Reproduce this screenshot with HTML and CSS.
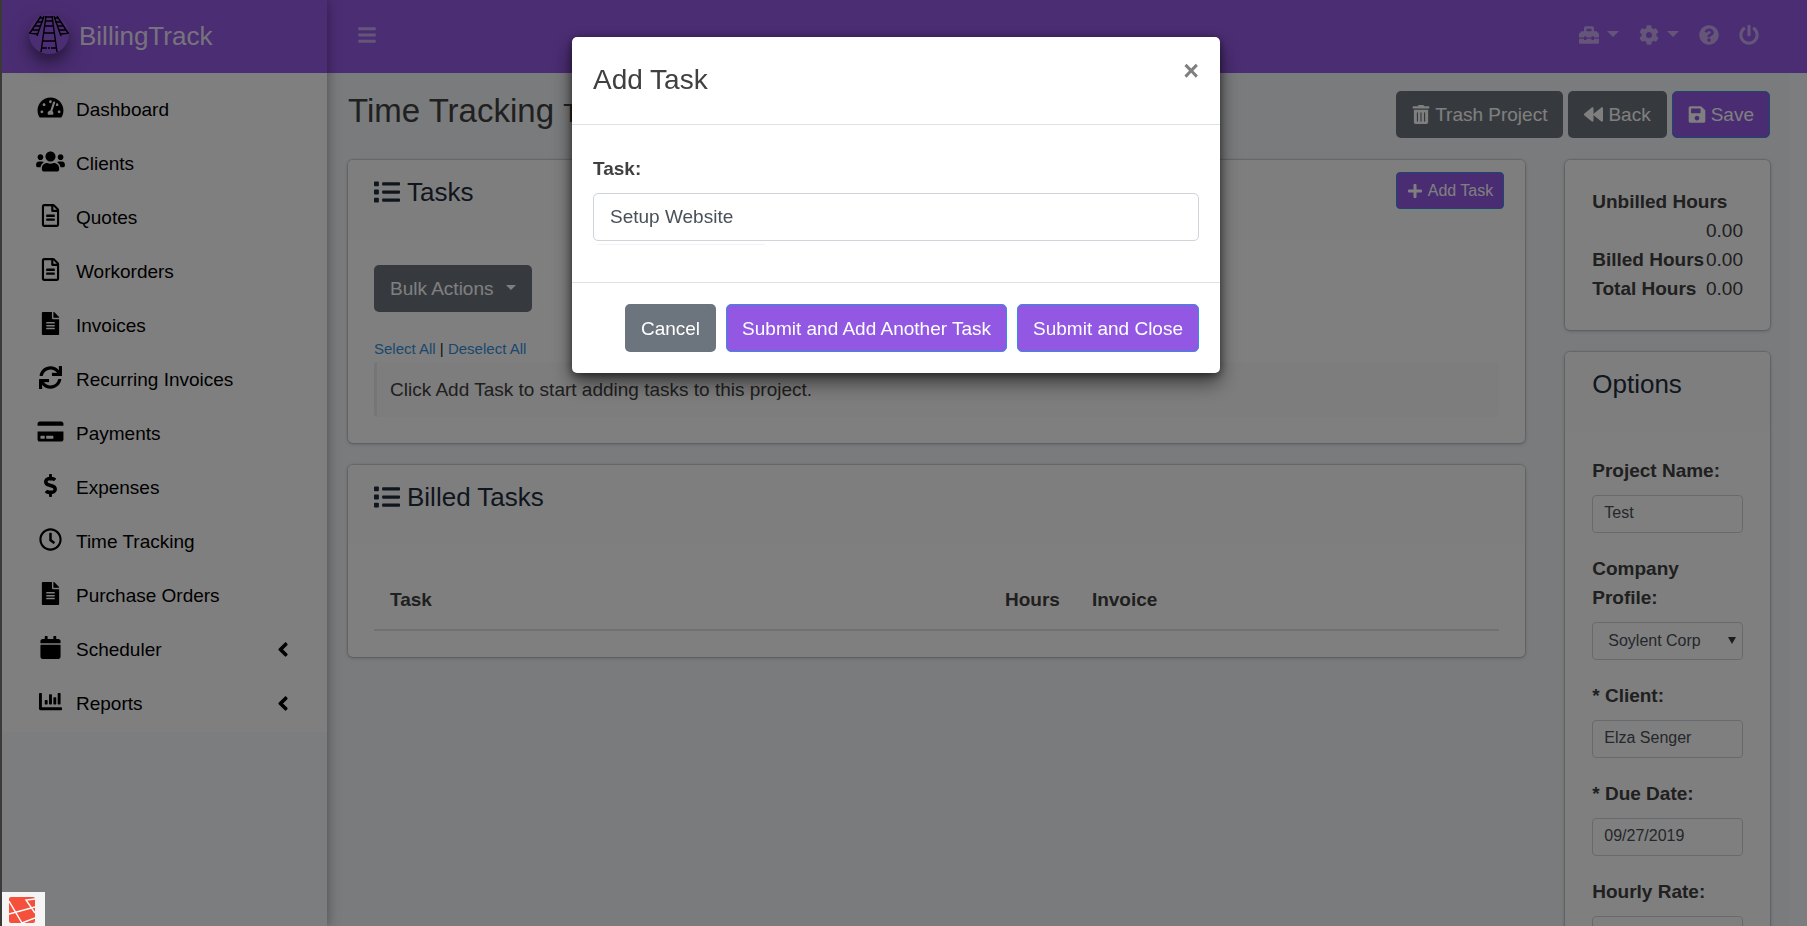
FILE: index.html
```html
<!DOCTYPE html>
<html lang="en">
<head>
<meta charset="utf-8">
<title>BillingTrack - Time Tracking</title>
<link rel="stylesheet" href="styles.css">
</head>
<body>
<svg class="sprite" aria-hidden="true">
  <symbol id="i-dash" viewBox="0 0 576 512"><path d="M288 32C128.94 32 0 160.94 0 320c0 52.8 14.25 102.26 39.06 144.8 5.61 9.62 16.3 15.2 27.44 15.2h443c11.14 0 21.83-5.58 27.44-15.2C561.75 422.26 576 372.8 576 320c0-159.06-128.94-288-288-288zm0 64c14.71 0 26.58 10.13 30.32 23.65-1.11 2.26-2.64 4.23-3.45 6.67l-9.22 27.67c-5.13 3.49-10.97 6.01-17.64 6.01-17.67 0-32-14.33-32-32S270.33 96 288 96zM96 384c-17.67 0-32-14.33-32-32s14.33-32 32-32 32 14.33 32 32-14.33 32-32 32zm48-160c-17.67 0-32-14.33-32-32s14.33-32 32-32 32 14.33 32 32-14.33 32-32 32zm246.77-72.41l-61.33 184C343.13 347.33 352 364.54 352 384c0 11.72-3.38 22.55-8.88 32H232.88c-5.5-9.45-8.88-20.28-8.88-32 0-33.94 26.5-61.43 59.9-63.59l61.34-184.01c4.17-12.56 17.73-19.45 30.36-15.17 12.57 4.19 19.35 17.79 15.17 30.36zm14.66 57.2l15.52-46.55c3.47-1.29 7.13-2.23 11.05-2.23 17.67 0 32 14.33 32 32s-14.33 32-32 32c-11.38-.01-20.89-6.28-26.57-15.22zM480 384c-17.67 0-32-14.33-32-32s14.33-32 32-32 32 14.33 32 32-14.33 32-32 32z"/></symbol>
  <symbol id="i-users" viewBox="0 0 640 512"><path d="M96 224c35.3 0 64-28.7 64-64s-28.7-64-64-64-64 28.7-64 64 28.7 64 64 64zm448 0c35.3 0 64-28.7 64-64s-28.7-64-64-64-64 28.7-64 64 28.7 64 64 64zm32 32h-64c-17.6 0-33.5 7.1-45.1 18.6 40.3 22.1 68.9 62 75.1 109.4h66c17.7 0 32-14.3 32-32v-32c0-35.3-28.7-64-64-64zm-256 0c61.9 0 112-50.1 112-112S381.9 32 320 32 208 82.1 208 144s50.1 112 112 112zm76.8 32h-8.3c-20.8 10-43.9 16-68.5 16s-47.6-6-68.5-16h-8.3C179.6 288 128 339.6 128 403.2V432c0 26.5 21.5 48 48 48h288c26.5 0 48-21.5 48-48v-28.8c0-63.6-51.6-115.2-115.2-115.2zm-223.7-13.4C161.5 263.1 145.6 256 128 256H64c-35.3 0-64 28.7-64 64v32c0 17.7 14.3 32 32 32h65.9c6.3-47.4 34.9-87.3 75.2-109.4z"/></symbol>
  <symbol id="i-file" viewBox="0 0 384 512"><path d="M288 248v28c0 6.6-5.4 12-12 12H108c-6.6 0-12-5.4-12-12v-28c0-6.6 5.4-12 12-12h168c6.6 0 12 5.4 12 12zm-12 72H108c-6.6 0-12 5.4-12 12v28c0 6.6 5.4 12 12 12h168c6.6 0 12-5.4 12-12v-28c0-6.6-5.4-12-12-12zm108-188.1V464c0 26.5-21.5 48-48 48H48c-26.5 0-48-21.5-48-48V48C0 21.5 21.5 0 48 0h204.1C264.8 0 277 5.1 286 14.1L369.9 98c9 8.9 14.1 21.2 14.1 33.9zm-128-80V128h76.1L256 51.9zM336 464V176H232c-13.3 0-24-10.7-24-24V48H48v416h288z"/></symbol>
  <symbol id="i-file-solid" viewBox="0 0 384 512"><path d="M224 136V0H24C10.7 0 0 10.7 0 24v464c0 13.3 10.7 24 24 24h336c13.3 0 24-10.7 24-24V160H248c-13.2 0-24-10.8-24-24zm64 236c0 6.6-5.4 12-12 12H108c-6.6 0-12-5.4-12-12v-8c0-6.6 5.4-12 12-12h168c6.6 0 12 5.4 12 12v8zm0-64c0 6.6-5.4 12-12 12H108c-6.6 0-12-5.4-12-12v-8c0-6.6 5.4-12 12-12h168c6.6 0 12 5.4 12 12v8zm0-72v8c0 6.6-5.4 12-12 12H108c-6.6 0-12-5.4-12-12v-8c0-6.6 5.4-12 12-12h168c6.6 0 12 5.4 12 12zm96-114.1v6.1H256V0h6.1c6.4 0 12.5 2.5 17 7l97.9 98c4.5 4.5 7 10.6 7 16.9z"/></symbol>
  <symbol id="i-sync" viewBox="0 0 512 512"><path d="M440.65 12.57l4 82.77A247.16 247.16 0 0 0 255.83 8C134.73 8 33.91 94.92 12.29 209.82A12 12 0 0 0 24.09 224h49.05a12 12 0 0 0 11.67-9.26 175.91 175.91 0 0 1 317-56.94l-101.46-4.86a12 12 0 0 0-12.57 12v47.41a12 12 0 0 0 12 12H500a12 12 0 0 0 12-12V12a12 12 0 0 0-12-12h-47.37a12 12 0 0 0-11.98 12.57zM255.83 432a175.61 175.61 0 0 1-146-77.8l101.8 4.87a12 12 0 0 0 12.57-12v-47.4a12 12 0 0 0-12-12H12a12 12 0 0 0-12 12V500a12 12 0 0 0 12 12h47.35a12 12 0 0 0 12-12.6l-4.15-82.57A247.17 247.17 0 0 0 255.83 504c121.11 0 221.93-86.92 243.55-201.82a12 12 0 0 0-11.8-14.18h-49.05a12 12 0 0 0-11.67 9.26A175.86 175.86 0 0 1 255.83 432z"/></symbol>
  <symbol id="i-card" viewBox="0 0 576 512"><path d="M0 432c0 26.5 21.5 48 48 48h480c26.5 0 48-21.5 48-48V256H0v176zm192-68c0-6.6 5.4-12 12-12h136c6.6 0 12 5.4 12 12v40c0 6.6-5.4 12-12 12H204c-6.6 0-12-5.4-12-12v-40zm-128 0c0-6.6 5.4-12 12-12h72c6.6 0 12 5.4 12 12v40c0 6.6-5.4 12-12 12H76c-6.6 0-12-5.4-12-12v-40zM576 80v48H0V80c0-26.5 21.5-48 48-48h480c26.5 0 48 21.5 48 48z"/></symbol>
  <symbol id="i-dollar" viewBox="0 0 288 512"><path d="M209.2 233.4l-108-31.6C88.7 198.2 80 186.5 80 173.5c0-16.3 13.2-29.5 29.5-29.5h66.3c12.2 0 24.2 3.7 34.2 10.5 6.1 4.1 14.3 3.1 19.5-2l34.8-34c7.1-6.9 6.1-18.4-1.8-24.5C238 74.8 207.4 64.1 176 64V16c0-8.8-7.2-16-16-16h-32c-8.8 0-16 7.2-16 16v48h-2.5C45.8 64-5.4 118.7.5 183.6c4.2 46.1 39.4 83.6 83.8 96.6l102.5 30c12.5 3.7 21.2 15.3 21.2 28.3 0 16.3-13.2 29.5-29.5 29.5h-66.3C100 368 88 364.3 78 357.5c-6.1-4.1-14.3-3.1-19.5 2l-34.8 34c-7.1 6.9-6.1 18.4 1.8 24.5 24.5 19.2 55.1 29.9 86.5 30v48c0 8.8 7.2 16 16 16h32c8.8 0 16-7.2 16-16v-48.2c46.6-.9 90.3-28.6 105.7-72.7 21.5-61.6-14.6-124.8-72.5-141.7z"/></symbol>
  <symbol id="i-clock" viewBox="0 0 512 512"><path d="M256 8C119 8 8 119 8 256s111 248 248 248 248-111 248-248S393 8 256 8zm0 448c-110.5 0-200-89.5-200-200S145.5 56 256 56s200 89.5 200 200-89.5 200-200 200zm61.8-104.4l-84.9-61.7c-3.1-2.3-4.9-5.9-4.9-9.7V116c0-6.6 5.4-12 12-12h32c6.6 0 12 5.4 12 12v141.7l66.8 48.6c5.4 3.9 6.5 11.4 2.6 16.8L334.6 349c-3.9 5.3-11.4 6.5-16.8 2.6z"/></symbol>
  <symbol id="i-calendar" viewBox="0 0 448 512"><path d="M12 192h424c6.6 0 12 5.4 12 12v260c0 26.5-21.5 48-48 48H48c-26.5 0-48-21.5-48-48V204c0-6.6 5.4-12 12-12zm436-44v-36c0-26.5-21.5-48-48-48h-48V12c0-6.6-5.4-12-12-12h-40c-6.6 0-12 5.4-12 12v52H160V12c0-6.6-5.4-12-12-12h-40c-6.6 0-12 5.4-12 12v52H48C21.5 64 0 85.5 0 112v36c0 6.6 5.4 12 12 12h424c6.6 0 12-5.4 12-12z"/></symbol>
  <symbol id="i-chart" viewBox="0 0 512 512"><path d="M332.8 320h38.4c6.4 0 12.8-6.4 12.8-12.8V172.8c0-6.4-6.4-12.8-12.8-12.8h-38.4c-6.4 0-12.8 6.4-12.8 12.8v134.4c0 6.4 6.4 12.8 12.8 12.8zm96 0h38.4c6.4 0 12.8-6.4 12.8-12.8V76.8c0-6.4-6.4-12.8-12.8-12.8h-38.4c-6.4 0-12.8 6.4-12.8 12.8v230.4c0 6.4 6.4 12.8 12.8 12.8zm-288 0h38.4c6.4 0 12.8-6.4 12.8-12.8v-70.4c0-6.4-6.4-12.8-12.8-12.8h-38.4c-6.4 0-12.8 6.4-12.8 12.8v70.4c0 6.4 6.4 12.8 12.8 12.8zm96 0h38.4c6.4 0 12.8-6.4 12.8-12.8V108.8c0-6.4-6.4-12.8-12.8-12.8h-38.4c-6.4 0-12.8 6.4-12.8 12.8v198.4c0 6.4 6.4 12.8 12.8 12.8zM496 384H64V80c0-8.84-7.16-16-16-16H16C7.16 64 0 71.16 0 80v336c0 17.67 14.33 32 32 32h464c8.84 0 16-7.16 16-16v-32c0-8.84-7.16-16-16-16z"/></symbol>
  <symbol id="i-angle" viewBox="0 0 256 512"><path d="M31.7 239l136-136c9.4-9.4 24.6-9.4 33.9 0l22.6 22.6c9.4 9.4 9.4 24.6 0 33.9L127.9 256l96.4 96.4c9.4 9.4 9.4 24.6 0 33.9L201.7 409c-9.4 9.4-24.6 9.4-33.9 0l-136-136c-9.5-9.4-9.5-24.6-.1-34z"/></symbol>
  <symbol id="i-list" viewBox="0 0 512 512"><path d="M80 368H16a16 16 0 0 0-16 16v64a16 16 0 0 0 16 16h64a16 16 0 0 0 16-16v-64a16 16 0 0 0-16-16zm0-320H16A16 16 0 0 0 0 64v64a16 16 0 0 0 16 16h64a16 16 0 0 0 16-16V64a16 16 0 0 0-16-16zm0 160H16a16 16 0 0 0-16 16v64a16 16 0 0 0 16 16h64a16 16 0 0 0 16-16v-64a16 16 0 0 0-16-16zm416 176H176a16 16 0 0 0-16 16v32a16 16 0 0 0 16 16h320a16 16 0 0 0 16-16v-32a16 16 0 0 0-16-16zm0-320H176a16 16 0 0 0-16 16v32a16 16 0 0 0 16 16h320a16 16 0 0 0 16-16V80a16 16 0 0 0-16-16zm0 160H176a16 16 0 0 0-16 16v32a16 16 0 0 0 16 16h320a16 16 0 0 0 16-16v-32a16 16 0 0 0-16-16z"/></symbol>
  <symbol id="i-bars" viewBox="0 0 448 512"><path d="M16 132h416c8.8 0 16-7.2 16-16V76c0-8.8-7.2-16-16-16H16C7.2 60 0 67.2 0 76v40c0 8.8 7.2 16 16 16zm0 160h416c8.8 0 16-7.2 16-16v-40c0-8.8-7.2-16-16-16H16c-8.8 0-16 7.2-16 16v40c0 8.8 7.2 16 16 16zm0 160h416c8.8 0 16-7.2 16-16v-40c0-8.8-7.2-16-16-16H16c-8.8 0-16 7.2-16 16v40c0 8.8 7.2 16 16 16z"/></symbol>
  <symbol id="i-toolbox" viewBox="0 0 512 512"><path d="M502.63 214.63l-45.25-45.25c-6-6-14.14-9.37-22.63-9.37H384V80c0-26.51-21.49-48-48-48H176c-26.51 0-48 21.49-48 48v80H77.25c-8.49 0-16.62 3.37-22.63 9.37L9.37 214.63c-6 6-9.37 14.14-9.37 22.63V320h128v-16c0-8.84 7.16-16 16-16h32c8.84 0 16 7.16 16 16v16h128v-16c0-8.84 7.16-16 16-16h32c8.84 0 16 7.16 16 16v16h128v-82.75c0-8.48-3.37-16.62-9.37-22.62zM320 160H192V96h128v64zm64 208c0 8.84-7.16 16-16 16h-32c-8.84 0-16-7.16-16-16v-16H192v16c0 8.84-7.16 16-16 16h-32c-8.84 0-16-7.16-16-16v-16H0v96c0 17.67 14.33 32 32 32h448c17.67 0 32-14.33 32-32v-96H384v16z"/></symbol>
  <symbol id="i-cog" viewBox="0 0 512 512"><path d="M487.4 315.7l-42.6-24.6c4.3-23.2 4.3-47 0-70.2l42.6-24.6c4.9-2.8 7.1-8.6 5.5-14-11.1-35.6-30-67.8-54.7-94.6-3.8-4.1-10-5.1-14.8-2.3L380.8 110c-17.9-15.4-38.5-27.3-60.8-35.1V25.8c0-5.6-3.9-10.5-9.4-11.7-36.7-8.2-74.3-7.8-109.2 0-5.5 1.2-9.4 6.1-9.4 11.7V75c-22.2 7.9-42.8 19.8-60.8 35.1L88.7 85.5c-4.9-2.8-11-1.9-14.8 2.3-24.7 26.7-43.6 58.9-54.7 94.6-1.7 5.4.6 11.2 5.5 14L67.3 221c-4.3 23.2-4.3 47 0 70.2l-42.6 24.6c-4.9 2.8-7.1 8.6-5.5 14 11.1 35.6 30 67.8 54.7 94.6 3.8 4.1 10 5.1 14.8 2.3l42.6-24.6c17.9 15.4 38.5 27.3 60.8 35.1v49.2c0 5.6 3.9 10.5 9.4 11.7 36.7 8.2 74.3 7.8 109.2 0 5.5-1.2 9.4-6.1 9.4-11.7v-49.2c22.2-7.9 42.8-19.8 60.8-35.1l42.6 24.6c4.9 2.8 11 1.9 14.8-2.3 24.7-26.7 43.6-58.9 54.7-94.6 1.5-5.5-.7-11.3-5.6-14.1zM256 336c-44.1 0-80-35.9-80-80s35.9-80 80-80 80 35.9 80 80-35.9 80-80 80z"/></symbol>
  <symbol id="i-help" viewBox="0 0 512 512"><path d="M504 256c0 136.997-111.043 248-248 248S8 392.997 8 256C8 119.083 119.043 8 256 8s248 111.083 248 248zM262.655 90c-54.497 0-89.255 22.957-116.549 63.758-3.536 5.286-2.353 12.415 2.715 16.258l34.699 26.31c5.205 3.947 12.621 3.008 16.665-2.122 17.864-22.658 30.113-35.797 57.303-35.797 20.429 0 45.698 13.148 45.698 32.958 0 14.976-12.363 22.667-32.534 33.976C247.128 238.528 216 254.941 216 296v4c0 6.627 5.373 12 12 12h56c6.627 0 12-5.373 12-12v-1.333c0-28.462 83.186-29.647 83.186-106.667 0-58.002-60.165-102-116.531-102zM256 338c-25.365 0-46 20.635-46 46 0 25.364 20.635 46 46 46s46-20.636 46-46c0-25.365-20.635-46-46-46z"/></symbol>
  <symbol id="i-power" viewBox="0 0 512 512"><path d="M400 54.1c63 45 104 118.6 104 201.9 0 136.8-110.8 247.7-247.5 248C120 504.3 8.2 393 8 256.4 7.9 173.1 48.9 99.3 111.8 54.2c11.7-8.3 28-4.8 35 7.7L162.6 90c5.9 10.5 3.1 23.8-6.6 31-41.5 30.8-68 79.6-68 134.9-.1 92.3 74.5 168.1 168 168.1 91.6 0 168.6-74.2 168-169.1-.3-51.8-24.7-101.8-68.1-134-9.7-7.2-12.4-20.5-6.5-30.9l15.8-28.1c7-12.4 23.2-16.1 34.8-7.8zM296 264V24c0-13.3-10.7-24-24-24h-32c-13.3 0-24 10.7-24 24v240c0 13.3 10.7 24 24 24h32c13.3 0 24-10.7 24-24z"/></symbol>
  <symbol id="i-trash" viewBox="0 0 448 512"><path d="M32 464a48 48 0 0 0 48 48h288a48 48 0 0 0 48-48V128H32zm272-256a16 16 0 0 1 32 0v224a16 16 0 0 1-32 0zm-96 0a16 16 0 0 1 32 0v224a16 16 0 0 1-32 0zm-96 0a16 16 0 0 1 32 0v224a16 16 0 0 1-32 0zM432 32H312l-9.4-18.7A24 24 0 0 0 281.1 0H166.8a23.72 23.72 0 0 0-21.4 13.3L136 32H16A16 16 0 0 0 0 48v32a16 16 0 0 0 16 16h416a16 16 0 0 0 16-16V48a16 16 0 0 0-16-16z"/></symbol>
  <symbol id="i-back" viewBox="0 0 512 512"><path d="M11.5 280.6l192 160c20.6 17.2 52.5 2.8 52.5-24.6V96c0-27.4-31.9-41.8-52.5-24.6l-192 160c-15.3 12.8-15.3 36.4 0 49.2zm256 0l192 160c20.6 17.2 52.5 2.8 52.5-24.6V96c0-27.4-31.9-41.8-52.5-24.6l-192 160c-15.3 12.8-15.3 36.4 0 49.2z"/></symbol>
  <symbol id="i-save" viewBox="0 0 448 512"><path d="M433.941 129.941l-83.882-83.882A48 48 0 0 0 316.118 32H48C21.49 32 0 53.49 0 80v352c0 26.51 21.49 48 48 48h352c26.51 0 48-21.49 48-48V163.882a48 48 0 0 0-14.059-33.941zM224 416c-35.346 0-64-28.654-64-64 0-35.346 28.654-64 64-64s64 28.654 64 64c0 35.346-28.654 64-64 64zm96-304.52V212c0 6.627-5.373 12-12 12H76c-6.627 0-12-5.373-12-12V108c0-6.627 5.373-12 12-12h228.52c3.183 0 6.235 1.264 8.485 3.515l3.48 3.48A11.996 11.996 0 0 1 320 111.48z"/></symbol>
  <symbol id="i-plus" viewBox="0 0 448 512"><path d="M416 208H272V64c0-17.67-14.33-32-32-32h-32c-17.67 0-32 14.33-32 32v144H32c-17.67 0-32 14.33-32 32v32c0 17.67 14.33 32 32 32h144v144c0 17.67 14.33 32 32 32h32c17.67 0 32-14.33 32-32V304h144c17.67 0 32-14.33 32-32v-32c0-17.67-14.33-32-32-32z"/></symbol>
</svg>

<div class="page">
  <aside class="sidebar">
    <a class="brand" href="#">
      <svg class="brand-logo" viewBox="0 0 40 40" fill="none" stroke="#000" stroke-width="1.4">
        <path d="M17 2 12 38M23 2l5 36M16 3h8M16 7h8M15 12h10M14 19h12M13 27h14"/>
        <path d="M12 34h6m1 0h2m1 0h6"/>
        <path d="M12 2 1 19M15 2 8 22M11 4h4M8 8h6M6 12h6M3 16h7M0 19l8 1M28 2l11 17M25 2l7 20M25 4h4M26 8h6M28 12h6M30 16h7M32 20l8-1"/>
      </svg>
      <span>BillingTrack</span>
    </a>
    <nav class="menu">
      <a class="menu-item" href="#"><svg class="menu-icon"><use href="#i-dash"/></svg><span>Dashboard</span></a>
      <a class="menu-item" href="#"><svg class="menu-icon"><use href="#i-users"/></svg><span>Clients</span></a>
      <a class="menu-item" href="#"><svg class="menu-icon"><use href="#i-file"/></svg><span>Quotes</span></a>
      <a class="menu-item" href="#"><svg class="menu-icon"><use href="#i-file"/></svg><span>Workorders</span></a>
      <a class="menu-item" href="#"><svg class="menu-icon"><use href="#i-file-solid"/></svg><span>Invoices</span></a>
      <a class="menu-item" href="#"><svg class="menu-icon"><use href="#i-sync"/></svg><span>Recurring Invoices</span></a>
      <a class="menu-item" href="#"><svg class="menu-icon"><use href="#i-card"/></svg><span>Payments</span></a>
      <a class="menu-item" href="#"><svg class="menu-icon"><use href="#i-dollar"/></svg><span>Expenses</span></a>
      <a class="menu-item" href="#"><svg class="menu-icon"><use href="#i-clock"/></svg><span>Time Tracking</span></a>
      <a class="menu-item" href="#"><svg class="menu-icon"><use href="#i-file-solid"/></svg><span>Purchase Orders</span></a>
      <a class="menu-item" href="#"><svg class="menu-icon"><use href="#i-calendar"/></svg><span>Scheduler</span><svg class="menu-angle"><use href="#i-angle"/></svg></a>
      <a class="menu-item" href="#"><svg class="menu-icon"><use href="#i-chart"/></svg><span>Reports</span><svg class="menu-angle"><use href="#i-angle"/></svg></a>
    </nav>
  </aside>

  <div class="content">
    <header class="topbar">
      <a class="top-link" href="#" aria-label="Toggle menu"><svg class="top-icon"><use href="#i-bars"/></svg></a>
      <nav class="top-nav">
        <a class="top-link" href="#" aria-label="Utilities"><svg class="top-icon"><use href="#i-toolbox"/></svg><span class="caret"></span></a>
        <a class="top-link" href="#" aria-label="Settings"><svg class="top-icon"><use href="#i-cog"/></svg><span class="caret"></span></a>
        <a class="top-link" href="#" aria-label="Help"><svg class="top-icon"><use href="#i-help"/></svg></a>
        <a class="top-link" href="#" aria-label="Sign out"><svg class="top-icon"><use href="#i-power"/></svg></a>
      </nav>
    </header>

    <main class="main">
      <div class="page-head">
        <h1 class="page-title">Time Tracking <small>Test</small></h1>
        <div class="page-actions">
          <button class="btn btn-grey" type="button"><svg class="btn-icon icon-narrow"><use href="#i-trash"/></svg>Trash Project</button>
          <button class="btn btn-grey" type="button"><svg class="btn-icon"><use href="#i-back"/></svg>Back</button>
          <button class="btn btn-purple" type="button"><svg class="btn-icon icon-narrow"><use href="#i-save"/></svg>Save</button>
        </div>
      </div>

      <div class="columns">
        <div class="column">
          <section class="card">
            <div class="card-head">
              <h2 class="card-title"><svg class="title-icon"><use href="#i-list"/></svg>Tasks</h2>
              <button class="btn btn-purple btn-small" type="button"><svg class="btn-icon icon-small"><use href="#i-plus"/></svg>Add Task</button>
            </div>
            <div class="card-body">
              <button class="btn btn-grey bulk" type="button">Bulk Actions<span class="caret"></span></button>
              <div class="select-links"><a href="#">Select All</a> | <a href="#">Deselect All</a></div>
              <div class="callout">Click Add Task to start adding tasks to this project.</div>
            </div>
          </section>
          <section class="card">
            <div class="card-head">
              <h2 class="card-title"><svg class="title-icon"><use href="#i-list"/></svg>Billed Tasks</h2>
            </div>
            <div class="card-body">
              <table class="table">
                <thead><tr><th class="col-task">Task</th><th class="col-hours">Hours</th><th>Invoice</th></tr></thead>
              </table>
            </div>
          </section>
        </div>

        <div class="column column-side">
          <section class="card">
            <div class="card-body">
              <div class="hours-row"><strong>Unbilled Hours</strong><span>0.00</span></div>
              <div class="hours-row"><strong>Billed Hours</strong><span>0.00</span></div>
              <div class="hours-row"><strong>Total Hours</strong><span>0.00</span></div>
            </div>
          </section>
          <section class="card">
            <div class="card-head"><h2 class="card-title">Options</h2></div>
            <form class="card-body options">
              <div class="field"><label for="name">Project Name:</label><input class="control" id="name" type="text" value="Test"></div>
              <div class="field"><label for="company">Company Profile:</label><span class="select-wrap"><select class="control" id="company"><option>Soylent Corp</option></select></span></div>
              <div class="field"><label for="client">* Client:</label><input class="control" id="client" type="text" value="Elza Senger"></div>
              <div class="field"><label for="due">* Due Date:</label><input class="control" id="due" type="text" value="09/27/2019"></div>
              <div class="field"><label for="rate">Hourly Rate:</label><input class="control" id="rate" type="text"></div>
            </form>
          </section>
        </div>
      </div>
    </main>
  </div>
</div>

<div class="overlay">
  <form class="modal" role="dialog" aria-labelledby="modal-title">
    <div class="modal-head">
      <h2 class="modal-title" id="modal-title">Add Task</h2>
      <button class="close" type="button" aria-label="Close">×</button>
    </div>
    <div class="modal-body">
      <label for="task">Task:</label>
      <input class="control control-large" id="task" type="text" value="Setup Website">
      <span class="hint-line"></span>
    </div>
    <div class="modal-foot">
      <button class="btn btn-grey" type="button">Cancel</button>
      <button class="btn btn-purple" type="button">Submit and Add Another Task</button>
      <button class="btn btn-purple" type="submit">Submit and Close</button>
    </div>
  </form>
</div>

<a class="debugbar" href="#" aria-label="Debug bar">
  <svg class="debug-icon" viewBox="0 0 26 26"><rect width="26" height="26" rx="2" fill="#f4503b"/><path d="M0 4l13 22 13-5M0 17l26-7M26 2l-9 1 9 13" fill="none" stroke="#fff" stroke-width="1.4"/></svg>
</a>
</body>
</html>
```
FILE: styles.css
```css
* { box-sizing: border-box; }

body {
  margin: 0;
  overflow: hidden;
  background: #3b3a39;
  color: #404040;
  font: 19px/29px "Liberation Sans", Arial, sans-serif;
}

svg { display: block; fill: currentColor; flex: none; }
h1, h2 { margin: 0; font-weight: 400; }
a { color: #3490dc; text-decoration: none; }
label, strong { font-weight: 700; }
.sprite { position: absolute; width: 0; height: 0; }

.page {
  display: flex;
  height: 100vh;
  margin-left: 2px;
  overflow: hidden;
  background: #f8fafc;
}

/* Sidebar */
.sidebar {
  z-index: 1;
  flex: none;
  width: 325px;
  background: #f8fafc;
  box-shadow: 0 0 12px rgba(0, 0, 0, .4);
}
.brand {
  display: flex;
  align-items: center;
  gap: 10px;
  height: 73px;
  padding: 0 27px;
  background: #965ae6;
  color: #fff;
  font-size: 26px;
}
.brand span { opacity: .85; }
.brand-logo {
  width: 40px;
  height: 40px;
  margin-bottom: 6px;
  border-radius: 50%;
  box-shadow: 0 10px 24px rgba(0, 0, 0, .25), 0 8px 12px rgba(0, 0, 0, .3);
}
.menu { padding: 9px 0 2px; background: #fff; }
.menu-item {
  display: flex;
  align-items: center;
  gap: 10px;
  height: 54px;
  padding: 0 32px 0 33px;
  color: #000;
}
.menu-icon { width: 31px; height: 23px; margin-bottom: 4px; }
.menu-angle { width: 12px; height: 23px; margin-left: auto; margin-right: 6px; }

/* Top bar */
.content { display: flex; flex: 1; flex-direction: column; min-width: 0; }
.topbar {
  display: flex;
  flex: none;
  align-items: center;
  justify-content: space-between;
  height: 73px;
  padding: 0 48px 3px 30px;
  background: #965ae6;
}
.top-nav { display: flex; gap: 20px; }
.top-link { display: flex; align-items: center; gap: 8px; color: rgba(255, 255, 255, .5); }
.top-icon { width: 20px; height: 20px; }
.caret {
  margin-bottom: 2px;
  border: 6px solid transparent;
  border-top-color: currentColor;
  border-bottom: 0;
}

/* Page */
.main { flex: 1; min-height: 0; margin-right: 18px; padding: 18px 19px 0 21px; background: #f4f6f9; }
.page-head { display: flex; justify-content: space-between; height: 69px; }
.page-title { font-size: 33px; line-height: 40px; }
.page-title small { font-size: 26px; }
.page-actions { display: flex; gap: 5px; align-items: flex-start; }

.btn {
  display: inline-flex;
  align-items: center;
  justify-content: center;
  gap: 5px;
  height: 47px;
  padding: 0 16px;
  border: 0;
  border-radius: 5px;
  background: #6c757d;
  color: #fff;
  font: inherit;
  white-space: nowrap;
}
.btn-purple { padding: 0 15px; border: 1px solid #3490dc; background: #9258e4; }
.btn-small { height: 37px; padding: 0 10px; border-radius: 4px; font-size: 16px; line-height: 24px; }
.btn-icon { width: 19px; height: 19px; }
.icon-narrow { width: 18px; }
.icon-small { width: 16px; height: 16px; }
.bulk { gap: 12px; }
.bulk .caret { border-width: 5px 5px 0; }

.columns { display: grid; grid-template-columns: minmax(0, 23fr) minmax(0, 4fr); gap: 40px; }
.column { display: flex; flex-direction: column; gap: 22px; }
.card {
  border-radius: 5px;
  background: #fff;
  box-shadow: 0 0 1px 1px rgba(0, 0, 0, .13), 0 1px 4px rgba(0, 0, 0, .2);
}
.card-head {
  display: flex;
  align-items: flex-start;
  justify-content: space-between;
  height: 79px;
  padding: 12px 21px 0 26px;
  border-radius: 5px 5px 0 0;
  background: #fcfcfc;
}
.card-title { display: flex; align-items: center; gap: 7px; color: #1f2d3d; font-size: 26px; line-height: 40px; }
.title-icon { width: 26px; height: 26px; }
.card-body { padding: 26px; }
.column-side .card-head { padding-left: 27px; }
.column-side .card-body { padding: 27px; }
.column-side .options { padding-top: 25px; }

.select-links { margin-top: 24px; font-size: 15px; line-height: 26px; color: #212529; }
.callout { padding: 13px; border-left: 3px solid #e9ecef; border-radius: 3px; background: #fafafa; }

.table { width: 100%; border-collapse: collapse; }
.table th { padding: 15px 16px; border-bottom: 2px solid #dee2e6; text-align: left; }
.col-task { width: 615px; }
.col-hours { width: 84px; }

.hours-row { display: flex; flex-wrap: wrap; justify-content: space-between; }
.hours-row span { margin-left: auto; }

.field { display: grid; gap: 10px; margin-bottom: 21px; }
.control {
  width: 100%;
  height: 38px;
  padding: 0 11px 2px;
  border: 1px solid #ced4da;
  border-radius: 4px;
  background: #fff;
  color: #495057;
  font: inherit;
  font-size: 16px;
}
.select-wrap { position: relative; }
.select-wrap select { display: block; padding: 0 15px 2px; appearance: none; }
.select-wrap::after {
  position: absolute;
  top: 15px;
  right: 7px;
  border: 4px solid transparent;
  border-top: 7px solid #343a40;
  border-bottom: 0;
  content: "";
}
.control-large { height: 48px; padding: 0 16px; border-radius: 5px; font-size: 19px; }

/* Dialog */
.overlay {
  position: fixed;
  z-index: 5;
  inset: 0 0 0 2px;
  padding: 37px 17px 0 0;
  background: rgba(0, 0, 0, .5);
}
.modal {
  width: 100%;
  max-width: 648px;
  margin: 0 auto;
  border-radius: 5px;
  background: #fff;
  box-shadow: 0 10px 20px rgba(0, 0, 0, .5), 0 2px 8px rgba(0, 0, 0, .5);
}
.modal-head {
  display: flex;
  align-items: flex-start;
  justify-content: space-between;
  height: 88px;
  padding: 21px;
  border-bottom: 1px solid #dee2e6;
}
.modal-title { font-size: 28px; line-height: 44px; }
.close { padding: 0; border: 0; background: none; color: #7f7f7f; font: 700 27px/27px "Liberation Sans", Arial, sans-serif; }
.modal-body { display: grid; gap: 10px; padding: 29px 21px 31px; }
.hint-line { width: 168px; height: 1px; margin: -7px 0 0 4px; background: #f3f3f3; }
.modal-foot { display: flex; flex-wrap: wrap; justify-content: flex-end; gap: 10px; padding: 21px; border-top: 1px solid #dee2e6; }
.modal-foot .btn { height: 48px; }

.debugbar {
  position: fixed;
  z-index: 6;
  bottom: 0;
  left: 2px;
  width: 43px;
  padding: 5px 7px 3px;
  background: #f5f5f5;
}
.debug-icon { width: 26px; height: 26px; }
```
